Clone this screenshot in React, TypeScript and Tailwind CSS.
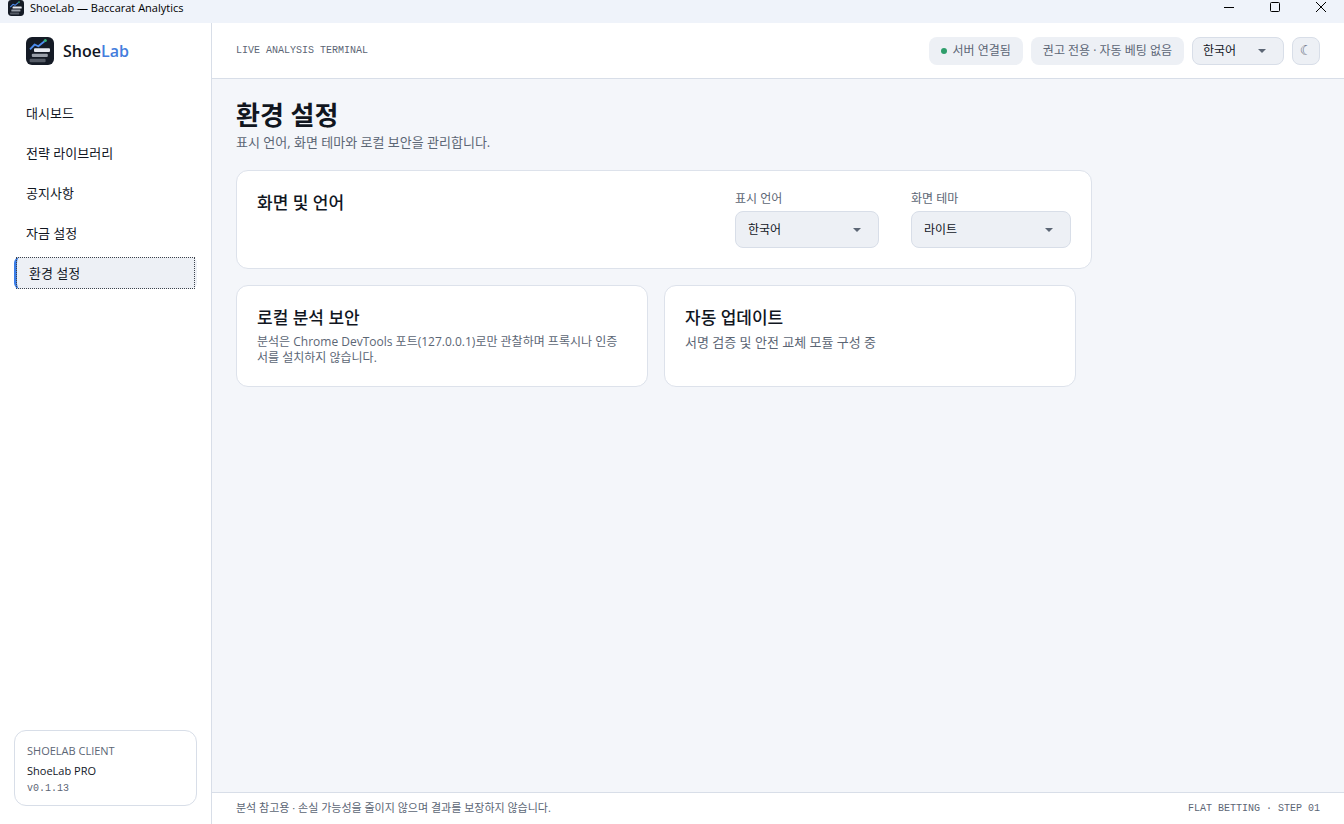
import { useState } from "react";
import type { ReactNode } from "react";

const navItems = ["대시보드", "전략 라이브러리", "공지사항", "자금 설정", "환경 설정"];

function Logo({ className }: { className: string }) {
  return (
    <svg viewBox="0 0 28 28" className={className} aria-hidden="true">
      <rect width="28" height="28" rx="6" fill="#151b26" />
      <path d="M4 12.300 8.700 7.500l3.600 1.800 6.200-5" fill="none" stroke="#4d8df0" strokeWidth="1.800" strokeLinejoin="round" />
      <circle cx="19.300" cy="3.600" r="1.500" fill="#35b37e" />
      <rect x="8" y="11.300" width="16" height="3.700" rx="1" fill="#e8ebf2" />
      <rect x="5.800" y="16.700" width="16" height="3.400" rx="1" fill="#9aa0aa" />
      <rect x="3.600" y="21.800" width="16" height="3.400" rx="1" fill="#555b66" />
    </svg>
  );
}

function SelectBox({
  id,
  label,
  options,
  className,
}: {
  id: string;
  label?: string;
  options: string[];
  className: string;
}) {
  return (
    <div className="relative">
      <select
        id={id}
        aria-label={label}
        className={`block appearance-none rounded-lg border border-[#d8dee8] bg-[#edf0f5] text-[12px] text-[#11161f] ${className}`}
      >
        {options.map((o) => (
          <option key={o}>{o}</option>
        ))}
      </select>
      <svg
        viewBox="0 0 8 4"
        className="pointer-events-none absolute top-1/2 right-[18px] h-1 w-2 -translate-y-1/2"
        aria-hidden="true"
      >
        <path d="M0 0h8L4 4z" fill="#5c6675" />
      </svg>
    </div>
  );
}

function Card({ title, children }: { title: string; children: ReactNode }) {
  return (
    <section className="rounded-xl border border-[#dde2eb] bg-white p-5">
      <h2 className="text-[17px] leading-6 font-medium">{title}</h2>
      {children}
    </section>
  );
}

export default function App() {
  const [active, setActive] = useState("환경 설정");

  return (
    <div className="flex min-h-screen flex-col bg-white font-['Open_Sans','Noto_Sans_CJK_KR',sans-serif] text-[#11161f]">
      <div className="flex h-[23px] items-start justify-between bg-[#eff3fa] pl-2">
        <div className="flex h-4 items-center gap-1.5">
          <Logo className="size-4" />
          <span className="text-[11px] leading-4 text-black">ShoeLab — Baccarat Analytics</span>
        </div>
        <div className="flex h-4 items-center text-black">
          <button aria-label="최소화" className="flex h-4 w-[46px] items-center justify-center">
            <svg viewBox="0 0 12 12" className="size-3" aria-hidden="true">
              <path d="M1 5.500h10" stroke="currentColor" />
            </svg>
          </button>
          <button aria-label="최대화" className="flex h-4 w-[46px] items-center justify-center">
            <svg viewBox="0 0 12 12" className="size-3" aria-hidden="true">
              <rect x="1.500" y="0.500" width="9" height="9" rx="1" fill="none" stroke="currentColor" />
            </svg>
          </button>
          <button aria-label="닫기" className="flex h-4 w-[46px] items-center justify-center">
            <svg viewBox="0 0 12 12" className="size-3" aria-hidden="true">
              <path d="M1 0l10 10M11 0 1 10" stroke="currentColor" />
            </svg>
          </button>
        </div>
      </div>

      <div className="flex flex-1">
        <aside className="flex w-[212px] shrink-0 flex-col border-r border-[#d8dee8] px-3.5 pt-3.5 pb-[18px]">
          <div className="flex items-center gap-[9px] pl-3">
            <Logo className="size-7" />
            <span className="text-[16px] leading-7 font-semibold">
              Shoe<span className="text-[#447ddd]">Lab</span>
            </span>
          </div>
          <nav className="mt-8 flex flex-col gap-2">
            {navItems.map((item) => (
              <button
                key={item}
                onClick={() => setActive(item)}
                className={
                  item === active
                    ? "relative flex h-8 rounded-md border-l-3 border-[#3b7de6] bg-[#edf0f5] text-left text-[13px] outline-none after:absolute after:inset-y-0 after:right-0.5 after:-left-px after:border after:border-dotted after:border-[#3c424c]"
                    : "flex h-8 rounded-md text-left text-[13px]"
                }
              >
                <span className="px-3 leading-8">{item}</span>
              </button>
            ))}
          </nav>
          <div className="mt-auto rounded-xl border border-[#d8dee8] px-3 pt-3 pb-2">
            <p className="text-[11px] leading-4 text-[#5c6675]">SHOELAB CLIENT</p>
            <p className="mt-0.5 text-[11px] leading-5">ShoeLab PRO</p>
            <p className="font-['Liberation_Mono',monospace] text-[10px] leading-4 text-[#5c6675]">v0.1.13</p>
          </div>
        </aside>

        <div className="flex min-w-0 flex-1 flex-col">
          <header className="flex h-14 items-center justify-between border-b border-[#d8dee8] px-6">
            <p className="font-['Liberation_Mono',monospace] text-[10px] leading-4 text-[#5c6675]">LIVE ANALYSIS TERMINAL</p>
            <div className="flex items-center gap-2 text-[12px] text-[#5c6675]">
              <div className="flex h-7 items-center gap-1.5 rounded-lg bg-[#edf0f5] px-3">
                <span className="size-1.5 rounded-full bg-[#2f9e6b]" />
                서버 연결됨
              </div>
              <div className="flex h-7 items-center rounded-lg bg-[#edf0f5] px-3">권고 전용 · 자동 베팅 없음</div>
              <SelectBox id="top-lang" label="언어" options={["한국어", "English"]} className="h-7 w-[92px] px-2.5" />
              <button
                aria-label="테마 전환"
                className="flex size-7 items-center justify-center rounded-lg border border-[#d8dee8] bg-[#edf0f5] font-['DejaVu_Sans',sans-serif] text-[14px]"
              >
                ☾
              </button>
            </div>
          </header>

          <main className="flex-1 bg-[#f4f6fa] px-6 pt-5">
            <h1 className="text-[26px] leading-8 font-bold">환경 설정</h1>
            <p className="mt-[3px] text-[13px] leading-4 text-[#5c6675]">표시 언어, 화면 테마와 로컬 보안을 관리합니다.</p>

            <section className="mt-5 flex max-w-[856px] justify-between rounded-xl border border-[#dde2eb] bg-white p-5">
              <h2 className="text-[17px] leading-6 font-medium">화면 및 언어</h2>
              <div className="flex gap-8">
                <div>
                  <label htmlFor="lang" className="mb-1 block text-[12px] leading-4 text-[#5c6675]">표시 언어</label>
                  <SelectBox id="lang" options={["한국어", "English"]} className="h-[37px] w-36 px-3" />
                </div>
                <div>
                  <label htmlFor="theme" className="mb-1 block text-[12px] leading-4 text-[#5c6675]">화면 테마</label>
                  <SelectBox id="theme" options={["라이트", "다크"]} className="h-[37px] w-40 px-3" />
                </div>
              </div>
            </section>

            <div className="mt-4 grid max-w-[840px] grid-cols-2 gap-4">
              <Card title="로컬 분석 보안">
                <p className="mt-1 text-[12px] leading-4 text-[#5c6675]">
                  분석은 Chrome DevTools 포트(127.0.0.1)로만 관찰하며 프록시나 인증서를 설치하지 않습니다.
                </p>
              </Card>
              <Card title="자동 업데이트">
                <p className="mt-1 text-[13px] leading-4 text-[#5c6675]">서명 검증 및 안전 교체 모듈 구성 중</p>
              </Card>
            </div>
          </main>

          <footer className="flex h-8 items-center justify-between border-t border-[#d8dee8] px-6 text-[#5c6675]">
            <p className="text-[11px]">분석 참고용 · 손실 가능성을 줄이지 않으며 결과를 보장하지 않습니다.</p>
            <p className="font-['Liberation_Mono',monospace] text-[10px]">FLAT BETTING · STEP 01</p>
          </footer>
        </div>
      </div>
    </div>
  );
}
